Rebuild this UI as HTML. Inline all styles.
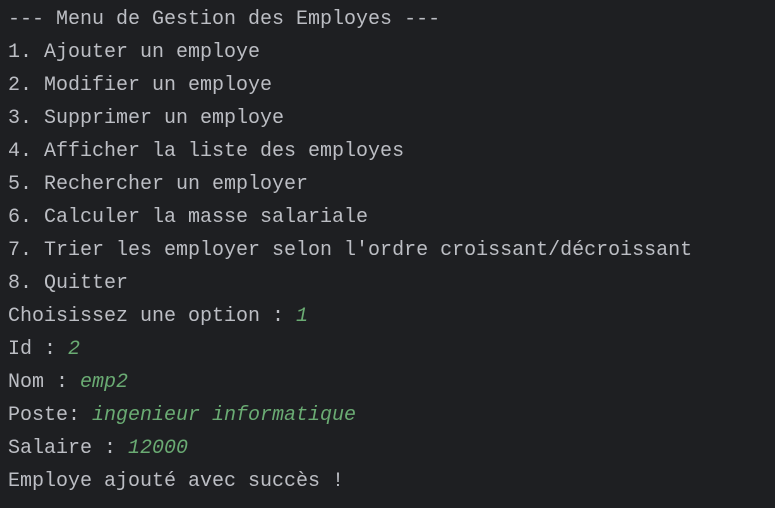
<!DOCTYPE html>
<html><head><meta charset="utf-8"><style>
html,body{margin:0;padding:0;background:#1e1f22;width:775px;height:508px;overflow:hidden}
pre{margin:0;padding:3px 0 0 8px;font-family:"Liberation Mono",monospace;font-size:20px;line-height:33px;color:#bcbec4}
i{color:#6aab73;font-style:italic}
</style></head><body><pre>--- Menu de Gestion des Employes ---
1. Ajouter un employe
2. Modifier un employe
3. Supprimer un employe
4. Afficher la liste des employes
5. Rechercher un employer
6. Calculer la masse salariale
7. Trier les employer selon l'ordre croissant/décroissant
8. Quitter
Choisissez une option : <i>1</i>
Id : <i>2</i>
Nom : <i>emp2</i>
Poste: <i>ingenieur informatique</i>
Salaire : <i>12000</i>
Employe ajouté avec succès !</pre></body></html>
